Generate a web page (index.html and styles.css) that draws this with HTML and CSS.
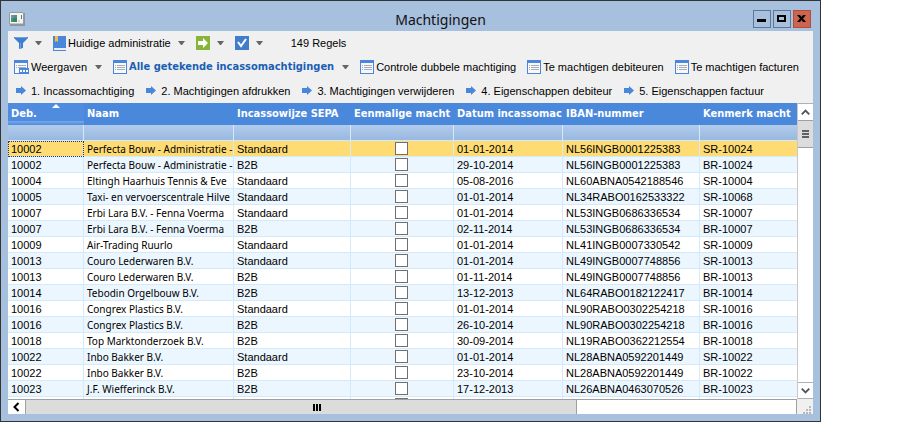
FILE: index.html
```html
<!DOCTYPE html>
<html lang="nl">
<head>
<meta charset="utf-8">
<title>Machtigingen</title>
<link rel="stylesheet" href="styles.css">
</head>
<body>
<svg class="defs" aria-hidden="true">
  <symbol id="list" viewBox="0 0 14 14"><path d="M0 0h14v14H0z" fill="#4a87dc"/><path d="M1 3h12v10H1z" fill="#f6f8fb"/><path d="M2 5h1v1H2zM4 5h8v1H4zM2 7h1v1H2zM4 7h8v1H4zM2 9h1v1H2zM4 9h8v1H4z" fill="#a9adb3"/></symbol>
  <symbol id="arrow" viewBox="0 0 10 10"><path d="M0 2h5V0l5 4.500L5 9V7H0z" fill="#4a87dc"/></symbol>
  <symbol id="caret" viewBox="0 0 7 4"><path d="M0 0h7L4 4H3z" fill="#666"/></symbol>
</svg>
<main class="window">
  <header class="titlebar">
    <svg class="app-icon" viewBox="0 0 16 14"><path d="M1 1h15v13H1z" fill="#8796a6"/><path d="M0 0h15v12H0z" fill="#fff"/><path d="M.5.5h14v11.500H.5z" fill="#f4f4f2" stroke="#9a9a96"/><path d="M2 3h6v7H2z" fill="#49937f"/><path d="M2 3h3v3H2z" fill="#6a92b5"/><path d="M4 6h4v4H4z" fill="#3b8463"/><path d="M12 3h1v4h-1z" fill="#3f8a83"/><path d="M9 8h2v2H9z" fill="#d8d8d2"/></svg>
    <h1>Machtigingen</h1>
    <div class="controls">
      <button aria-label="Minimaliseren"><svg viewBox="0 0 16 16"><path d="M3 8h9v3H3z"/></svg></button>
      <button aria-label="Maximaliseren"><svg viewBox="0 0 16 16"><path fill-rule="evenodd" d="M3 4h9v7H3zM5 6v3h5V6z"/></svg></button>
      <button class="close" aria-label="Sluiten"><svg viewBox="0 0 16 16"><path d="M3 4h3l1.500 2L9 4h3L9 7.500l3 3.500H9L7.500 9 6 11H3l3-3.500z"/></svg></button>
    </div>
  </header>
  <div class="client">
    <nav class="toolbars">
      <div class="bar bar-main">
        <button aria-label="Filter"><svg class="i14" viewBox="0 0 14 14"><path d="M0 1h14v1L9 7v5l-4 1V7L0 2z" fill="#3f7dce"/><path d="M1 1h12v1H1zM6 7h1v5H6z" fill="#6da2e8"/></svg><svg class="caret"><use href="#caret"/></svg></button>
        <button><svg class="book" viewBox="0 0 13 15"><path d="M0 0h13v15H0z" fill="#4a87dc"/><path d="M1 12h12v2H1z" fill="#e9edf3"/><path d="M2 0h3v6L3.500 5 2 6z" fill="#f0be4a"/></svg><span>Huidige administratie</span><svg class="caret"><use href="#caret"/></svg></button>
        <button aria-label="Ga naar"><svg class="i14" viewBox="0 0 14 14"><path d="M0 0h14v14H0z" fill="#86b539"/><path d="M2 5h5V2l5 5-5 5V9H2z" fill="#fff"/></svg><svg class="caret"><use href="#caret"/></svg></button>
        <button aria-label="Selecteren"><svg class="i14" viewBox="0 0 14 14"><path d="M0 0h14v14H0z" fill="#427dcc"/><path d="M3 6l3 4 5-7" fill="none" stroke="#fff" stroke-width="2"/></svg><svg class="caret"><use href="#caret"/></svg></button>
        <span class="count">149 Regels</span>
      </div>
      <div class="bar bar-views">
        <button><svg class="i15" viewBox="0 0 15 14"><path d="M0 0h14v14H0z" fill="#4a87dc"/><path d="M1 3h12v10H1z" fill="#f6f8fb"/><path d="M2 5h1v1H2zM4 5h8v1H4zM2 7h1v1H2zM4 7h8v1H4z" fill="#a9adb3"/><path d="M5 8h10v6H5z" fill="#4a87dc"/><path d="M6 10h2v2H6zM9 10h2v2H9zM12 10h2v2h-2z" fill="#fff"/></svg><span>Weergaven</span><svg class="caret"><use href="#caret"/></svg></button>
        <button class="active"><svg class="i14"><use href="#list"/></svg><span>Alle getekende incassomachtigingen</span><svg class="caret"><use href="#caret"/></svg></button>
        <button><svg class="i14"><use href="#list"/></svg><span>Controle dubbele machtiging</span></button>
        <button><svg class="i14"><use href="#list"/></svg><span>Te machtigen debiteuren</span></button>
        <button><svg class="i14"><use href="#list"/></svg><span>Te machtigen facturen</span></button>
      </div>
      <div class="bar bar-actions">
        <button><svg class="arrow"><use href="#arrow"/></svg><span>1. Incassomachtiging</span></button>
        <button><svg class="arrow"><use href="#arrow"/></svg><span>2. Machtigingen afdrukken</span></button>
        <button><svg class="arrow"><use href="#arrow"/></svg><span>3. Machtigingen verwijderen</span></button>
        <button><svg class="arrow"><use href="#arrow"/></svg><span>4. Eigenschappen debiteur</span></button>
        <button><svg class="arrow"><use href="#arrow"/></svg><span>5. Eigenschappen factuur</span></button>
      </div>
    </nav>
    <div class="grid">
      <div class="viewport">
        <table>
          <colgroup><col class="c-deb"><col class="c-name"><col class="c-type"><col class="c-once"><col class="c-date"><col class="c-iban"><col></colgroup>
          <thead>
            <tr><th class="sorted">Deb.<svg class="sort" viewBox="0 0 8 4"><path d="M4 0l4 4H0z" fill="#fff"/></svg></th><th>Naam</th><th>Incassowijze SEPA</th><th>Eenmalige macht</th><th>Datum incassomac</th><th>IBAN-nummer</th><th>Kenmerk macht</th></tr>
            <tr class="filters"><td><input aria-label="Filter deb."></td><td><input aria-label="Filter naam"></td><td><input aria-label="Filter incassowijze"></td><td><input aria-label="Filter eenmalig"></td><td><input aria-label="Filter datum"></td><td><input aria-label="Filter IBAN"></td><td><input aria-label="Filter kenmerk"></td></tr>
          </thead>
          <tbody id="rows"></tbody>
        </table>
      </div>
      <div class="vscroll">
        <button aria-label="Omhoog"><svg viewBox="0 0 16 16"><path d="M4 10l4-4 4 4" fill="none" stroke="#555" stroke-width="2"/></svg></button>
        <div class="vthumb"><i></i><i></i><i></i></div>
        <button class="down" aria-label="Omlaag"><svg viewBox="0 0 16 16"><path d="M4 6l4 4 4-4" fill="none" stroke="#555" stroke-width="2"/></svg></button>
      </div>
      <div class="hscroll">
        <button aria-label="Links"><svg viewBox="0 0 16 14"><path d="M10 3L6 7l4 4" fill="none" stroke="#000" stroke-width="2"/></svg></button>
        <div class="hthumb"><i></i><i></i><i></i></div>
      </div>
      <div class="corner"><svg viewBox="0 0 16 15"><path d="M12 7h2v2h-2zM9 10h2v2H9zM12 10h2v2h-2zM6 13h2v2H6zM9 13h2v2H9zM12 13h2v2h-2z" fill="#b8b8b8"/></svg></div>
    </div>
  </div>
</main>
<script src="script.js"></script>
</body>
</html>
```
FILE: styles.css
```css
* { box-sizing: border-box; }
body { margin: 0; background: #fff; overflow: hidden; font-family: "Liberation Sans", Arial, sans-serif; }
button { border: 0; margin: 0; padding: 0; background: none; font: inherit; color: inherit; display: flex; align-items: center; white-space: nowrap; }
svg { display: block; flex: none; }
.defs { position: absolute; width: 0; height: 0; }

.window { height: 100vh; margin-right: 102px; display: flex; flex-direction: column; border: 1px solid #333438; background: #a6c0de; padding: 0 7px 7px; }
.titlebar { height: 30px; flex: none; display: grid; grid-template-columns: 1fr auto 1fr; align-items: center; padding-top: 6px; margin-right: -5px; padding-left: 1px; }
.titlebar h1 { margin: 0; padding: 2px 0 0 54px; font: 14px/22px "Noto Sans", sans-serif; color: #111; }
.app-icon { width: 16px; height: 14px; }
.controls { display: flex; gap: 2px; justify-content: flex-end; padding-right: 7px; }
.controls button { width: 18px; height: 18px; border: 1px solid #5d7596; }
.controls svg { width: 16px; height: 16px; }
.controls .close { background: #cd6450; border-color: #b84a39; }

.client { flex: 1; min-height: 0; display: flex; flex-direction: column; background: #f0f0f0; }
.toolbars { color: #000; font: 11px/24px "Liberation Sans", Arial, sans-serif; }
.bar { display: flex; height: 24px; padding-left: 6px; gap: 11px; }
.bar button { gap: 2px; }
.bar .caret { width: 7px; height: 4px; margin-left: 6px; }
.bar-main button .caret { margin-left: 5px; }
.count { margin-left: 17px; }
.bar-actions { padding-left: 8px; gap: 12px; }
.bar-actions button { gap: 5px; }
.i14 { width: 14px; height: 14px; }
.i15 { width: 15px; height: 14px; }
.book { width: 13px; height: 15px; }
.arrow { width: 10px; height: 10px; }
.bar .active { color: #1b5fb4; font: bold 11px/24px "DejaVu Sans Condensed", "DejaVu Sans", sans-serif; font-stretch: condensed; }

.grid { flex: 1; min-height: 0; display: grid; grid-template: minmax(0, 1fr) 15px / minmax(0, 1fr) 16px; }
.viewport { overflow: hidden; background: #fff; }
table { width: 100%; table-layout: fixed; border-collapse: separate; border-spacing: 0; }
.c-deb { width: 76px; } .c-name { width: 150px; } .c-type { width: 117px; }
.c-once { width: 103px; } .c-date { width: 109px; } .c-iban { width: 137px; }
th, td { text-align: left; overflow: hidden; white-space: nowrap; }
th { height: 22px; padding: 0 0 0 3px; background: #4a88dc; color: #fff; font: bold 11px/22px "DejaVu Sans Condensed", "DejaVu Sans", sans-serif; font-stretch: condensed; }
.sorted { position: relative; background: linear-gradient(#4f8cdf 18px, #77a8e8 18px, #4f8cdf 22px); }
.sort { position: absolute; top: 1px; left: 44px; width: 8px; height: 4px; }
td { height: 16px; padding: 2px 0 0 3px; border-right: 1px solid #d3eafb; border-bottom: 1px solid #d3eafb; font: 11px/13px "Liberation Sans", Arial, sans-serif; color: #000; }
tbody td:nth-child(2) { padding-top: 1px; font: 10px/14px "Noto Sans", sans-serif; }
td:last-child { border-right: 0; }
.filters td { padding: 0; background: linear-gradient(#b2cbea, #98b8e2); }
.filters input { display: block; width: 100%; height: 15px; border: 0; padding: 0 3px; background: none; outline: 0; }
tbody tr:nth-child(even) td { background: #ebf6ff; }
tbody .selected td { background: #ffdc73; }
tbody .selected td:first-child { outline: 1px dotted #223a78; outline-offset: -1px; }
td.check { text-align: center; padding: 0 1px 0 0; }
td input[type=checkbox] { appearance: none; display: block; width: 13px; height: 13px; margin: 1px auto; border: 1px solid #707070; background: #fff; }

.vscroll { display: flex; flex-direction: column; background: #fff; border-left: 1px solid #c8c8c8; }
.vscroll button { height: 17px; border-top: 1px solid #b0b0b0; background: #fff; }
.vscroll button svg { width: 15px; height: 15px; }
.vthumb { height: 28px; display: flex; flex-direction: column; gap: 1px; align-items: center; justify-content: center; background: #dcdcdc; border: solid #a0a0a0; border-width: 1px 0; }
.vthumb i { width: 7px; height: 2px; background: #606060; }
.vscroll .down { margin-top: auto; border-bottom: 1px solid #b0b0b0; }
.hscroll { display: flex; background: #fff; border: solid #a0a0a0; border-width: 1px 1px 0 0; }
.hscroll button svg { width: 17px; height: 14px; }
.hthumb { margin-right: auto; flex: 0 1 70%; display: flex; gap: 1px; align-items: center; justify-content: center; background: #dcdcdc; border: solid #a0a0a0; border-width: 0 1px; padding-left: 32px; }
.hthumb i { width: 2px; height: 7px; background: #000; }
.corner { background: #f0f0f0; }
.corner svg { width: 16px; height: 15px; }
```
FILE: script.js
```js
const rows = [
  ["10002", "Perfecta Bouw - Administratie -", "Standaard", "01-01-2014", "NL56INGB0001225383", "SR-10024"],
  ["10002", "Perfecta Bouw - Administratie -", "B2B", "29-10-2014", "NL56INGB0001225383", "BR-10024"],
  ["10004", "Eltingh Haarhuis Tennis & Eve", "Standaard", "05-08-2016", "NL60ABNA0542188546", "SR-10004"],
  ["10005", "Taxi- en vervoerscentrale Hilve", "Standaard", "01-01-2014", "NL34RABO0162533322", "SR-10068"],
  ["10007", "Erbi Lara B.V. - Fenna Voerma", "Standaard", "01-01-2014", "NL53INGB0686336534", "SR-10007"],
  ["10007", "Erbi Lara B.V. - Fenna Voerma", "B2B", "02-11-2014", "NL53INGB0686336534", "BR-10007"],
  ["10009", "Air-Trading Ruurlo", "Standaard", "01-01-2014", "NL41INGB0007330542", "SR-10009"],
  ["10013", "Couro Lederwaren B.V.", "Standaard", "01-01-2014", "NL49INGB0007748856", "SR-10013"],
  ["10013", "Couro Lederwaren B.V.", "B2B", "01-11-2014", "NL49INGB0007748856", "BR-10013"],
  ["10014", "Tebodin Orgelbouw B.V.", "B2B", "13-12-2013", "NL64RABO0182122417", "BR-10014"],
  ["10016", "Congrex Plastics B.V.", "Standaard", "01-01-2014", "NL90RABO0302254218", "SR-10016"],
  ["10016", "Congrex Plastics B.V.", "B2B", "26-10-2014", "NL90RABO0302254218", "BR-10016"],
  ["10018", "Top Marktonderzoek B.V.", "B2B", "30-09-2014", "NL19RABO0362212554", "BR-10018"],
  ["10022", "Inbo Bakker B.V.", "Standaard", "01-01-2014", "NL28ABNA0592201449", "SR-10022"],
  ["10022", "Inbo Bakker B.V.", "B2B", "23-10-2014", "NL28ABNA0592201449", "BR-10022"],
  ["10023", "J.F. Wiefferinck B.V.", "B2B", "17-12-2013", "NL26ABNA0463070526", "BR-10023"],
  ["", "", "", "", "", ""]
];
const body = document.getElementById("rows");
rows.forEach((row, index) => {
  const tr = body.insertRow();
  if (index === 0) tr.className = "selected";
  row.forEach((value, column) => {
    if (column === 3) {
      const cell = tr.insertCell();
      cell.className = "check";
      const box = document.createElement("input");
      box.type = "checkbox";
      box.setAttribute("aria-label", "Eenmalige machtiging " + row[0]);
      cell.append(box);
    }
    tr.insertCell().textContent = value;
  });
});
```
